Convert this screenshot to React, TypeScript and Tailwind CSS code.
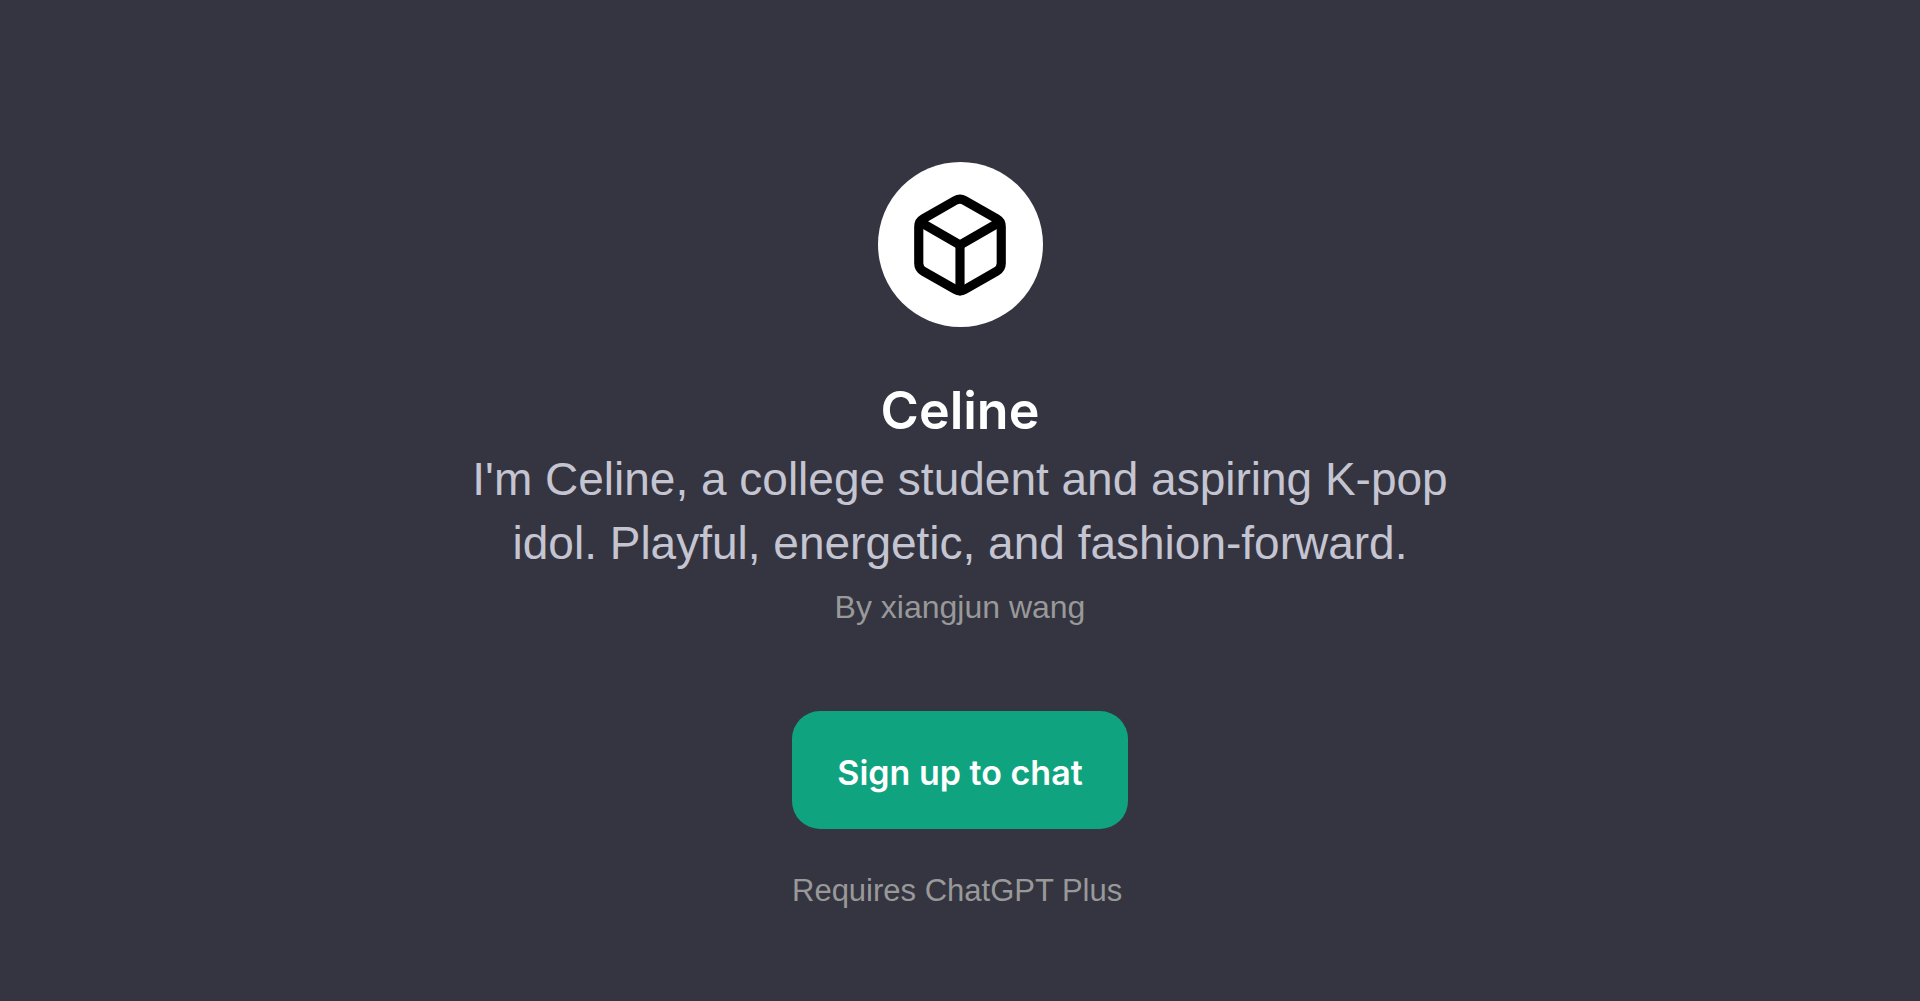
import { Box } from "lucide-react";

export default function App() {
  return (
    <main className="flex min-h-screen flex-col items-center bg-[#343541] px-6 pt-[162px] font-['Liberation_Sans',Arial,sans-serif]">
      <div className="flex size-[165px] items-center justify-center rounded-full bg-white text-black">
        <Box size={110} strokeWidth={2} aria-hidden="true" />
      </div>
      <h1 className="mt-[52px] text-center font-['Inter',sans-serif] text-[52px] leading-[64px] font-semibold text-white">
        Celine
      </h1>
      <p className="mt-1 max-w-[1000px] text-center text-[46px] leading-[64px] text-[#c5c5d2]">
        I'm Celine, a college student and aspiring K-pop idol. Playful, energetic, and fashion-forward.
      </p>
      <p className="text-center text-[32px] leading-[64px] text-[#999999]">By xiangjun wang</p>
      <div className="mt-[72px] flex min-w-[336px] flex-col">
        <button
          type="button"
          className="h-[118px] rounded-[28px] bg-[#10a37f] px-11 pt-1 font-['Inter',sans-serif] text-[34px] font-semibold text-white"
        >
          Sign up to chat
        </button>
        <p className="mt-[30px] text-[31px] leading-[64px] text-[#999999]">Requires ChatGPT Plus</p>
      </div>
    </main>
  );
}
